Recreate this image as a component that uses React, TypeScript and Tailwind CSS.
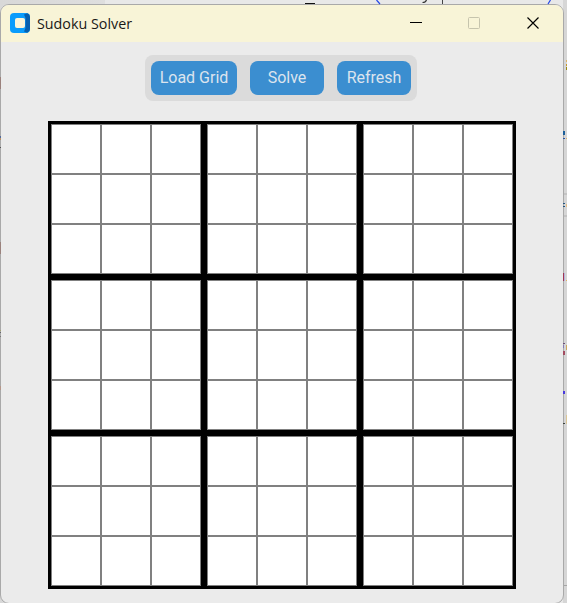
import React from 'react';

const blocks = Array.from({ length: 9 }, (_, i) => i);

type Mark = { x: number; y: number; w: number; h: number; c: string };

const editorMarks: Mark[] = [
  { x: 305, y: 3, w: 10, h: 1, c: '#111' },
  { x: 442, y: 0, w: 1, h: 4, c: '#444' },
  { x: 566, y: 60, w: 1, h: 2, c: '#e0b468' },
  { x: 566, y: 64, w: 1, h: 2, c: '#c9982e' },
  { x: 566, y: 67, w: 1, h: 3, c: '#9a8b10' },
  { x: 563, y: 131, w: 2, h: 4, c: '#1c5f9a' },
  { x: 563, y: 138, w: 2, h: 1, c: '#2b55a5' },
  { x: 566, y: 138, w: 1, h: 1, c: '#e0b468' },
  { x: 563, y: 203, w: 2, h: 1, c: '#235580' },
  { x: 563, y: 206, w: 2, h: 1, c: '#235580' },
  { x: 566, y: 204, w: 1, h: 3, c: '#e3bd87' },
  { x: 564, y: 193, w: 3, h: 2, c: '#c4c4c4' },
  { x: 564, y: 215, w: 3, h: 2, c: '#c4c4c4' },
  { x: 563, y: 273, w: 1, h: 8, c: '#a03550' },
  { x: 564, y: 273, w: 1, h: 8, c: '#b8b4dc' },
  { x: 566, y: 280, w: 1, h: 1, c: '#e0b468' },
  { x: 563, y: 343, w: 2, h: 1, c: '#6c4f7a' },
  { x: 563, y: 345, w: 1, h: 3, c: '#8578b8' },
  { x: 566, y: 345, w: 1, h: 5, c: '#cda85e' },
  { x: 563, y: 351, w: 2, h: 4, c: '#a34c61' },
  { x: 563, y: 391, w: 2, h: 3, c: '#4939df' },
  { x: 566, y: 415, w: 1, h: 9, c: '#dbc697' },
  { x: 563, y: 423, w: 2, h: 1, c: '#3b433d' },
  { x: 564, y: 585, w: 3, h: 1, c: '#a6a6a6' },
  { x: 0, y: 77, w: 1, h: 12, c: '#9b827d' },
  { x: 0, y: 136, w: 1, h: 2, c: '#536a99' },
  { x: 0, y: 138, w: 1, h: 2, c: '#b49068' },
  { x: 0, y: 147, w: 1, h: 1, c: '#555' },
  { x: 0, y: 242, w: 1, h: 12, c: '#9b827d' },
  { x: 0, y: 330, w: 1, h: 1, c: '#a5a274' },
  { x: 0, y: 332, w: 1, h: 1, c: '#666' },
  { x: 0, y: 336, w: 1, h: 1, c: '#777' },
  { x: 0, y: 386, w: 1, h: 4, c: '#b4978a' },
];

function Backdrop() {
  return (
    <svg className="pointer-events-none absolute inset-0" width="567" height="603" shapeRendering="crispEdges" aria-hidden="true">
      {editorMarks.map((m) => (
        <rect key={`${m.x}-${m.y}`} x={m.x} y={m.y} width={m.w} height={m.h} fill={m.c} />
      ))}
      <g fill="none" strokeWidth="1.2" shapeRendering="auto">
        <path d="M376.5 0 380 4M550.5 0 548 4" stroke="#2446e8" />
        <path d="M426.5 0Q425.5 2.5 422.5 2.5" stroke="#333" />
      </g>
    </svg>
  );
}

function AppIcon() {
  return (
    <svg width="20" height="20" viewBox="0 0 20 20" className="mb-px shrink-0" aria-hidden="true">
      <rect width="20" height="20" rx="4" fill="#0a9cfc" />
      <path d="M17.2.3A4 4 0 0 1 20 4v12a4 4 0 0 1-2.8 3.7L14 18.5l1.5-3.5V5L14 1.5z" fill="#075fae" />
      <rect x="5" y="5" width="10" height="10" rx="2" fill="#faf5da" />
    </svg>
  );
}

function TitleBar() {
  return (
    <header className="flex h-[37px] items-center bg-[#f8f4d7] pl-[9px] pr-[24px]">
      <AppIcon />
      <h1 className="ml-[7px] mt-px text-[15px] leading-5 text-[#181816] [font-family:'Open_Sans','Noto_Sans',sans-serif]">
        <svg width="98" height="20" className="block overflow-visible">
          <text x="0" y="15" textLength="95" lengthAdjust="spacingAndGlyphs" fill="currentColor">Sudoku Solver</text>
        </svg>
      </h1>
      <div className="mb-px ml-auto flex items-center">
        <svg width="12" height="12" aria-label="Minimize" shapeRendering="crispEdges">
          <path d="M0 5h12v1H0z" fill="#000" />
        </svg>
        <svg className="ml-[46px]" width="12" height="12" aria-label="Maximize">
          <rect x=".5" y=".5" width="11" height="11" rx="1" fill="none" stroke="#c6c4ad" />
        </svg>
        <svg className="ml-[47px]" width="12" height="12" aria-label="Close">
          <path d="m.5.5 11 11M11.5.5l-11 11" stroke="#000" strokeWidth="1.15" />
        </svg>
      </div>
    </header>
  );
}

function ActionButton({ label, width }: { label: string; width: string }) {
  return (
    <button className={`h-[34px] rounded-[8px] bg-[#3b8ed0] pb-px text-center text-[16px] leading-[33px] text-[#dce4ee] ${width}`}>
      {label}
    </button>
  );
}

function Board() {
  return (
    <div className="mx-auto mt-5 grid size-[468px] grid-cols-3 gap-[6px] border-[3px] border-black bg-black">
      {blocks.map((block) => (
        <div key={block} className="grid size-[150px] grid-cols-3">
          {blocks.map((cell) => (
            <div key={cell} className="size-[50px] border border-[#808080] bg-white" />
          ))}
        </div>
      ))}
    </div>
  );
}

export default function App() {
  return (
    <main className="relative h-[603px] w-[567px] overflow-hidden bg-[linear-gradient(90deg,#d8d8d8_0,#dedede_105px,#e8e8e8_105px,#e8e8e8_563px,#d6d6d6_563px)] pt-1 [font-family:Roboto,sans-serif]">
      <section className="h-[600px] w-[564px] overflow-hidden rounded-[9px] border border-[#a9a9a9] bg-[#ebebeb]">
        <TitleBar />
        <div className="ml-[144px] mt-[13px] flex h-[46px] w-[272px] gap-[13px] rounded-[8px] bg-[#dbdbdb] p-[6px]">
          <ActionButton label="Load Grid" width="w-[86px]" />
          <ActionButton label="Solve" width="w-[74px]" />
          <ActionButton label="Refresh" width="w-[74px]" />
        </div>
        <Board />
      </section>
      <Backdrop />
    </main>
  );
}
